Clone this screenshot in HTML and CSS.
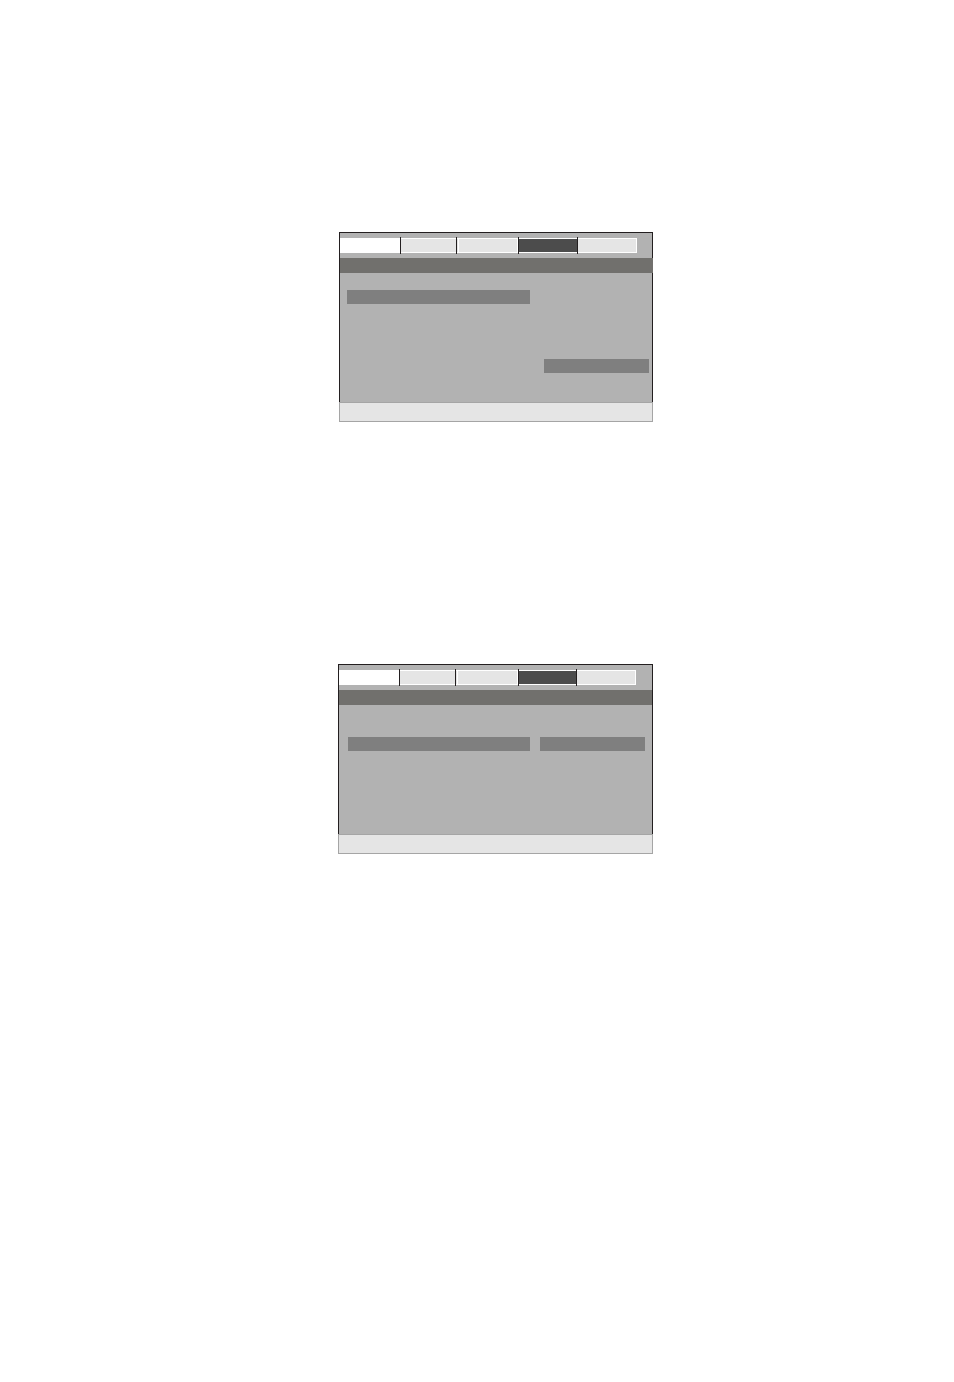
FILE: index.html
```html
<!DOCTYPE html>
<html lang="en">
<head>
<meta charset="utf-8">
<title>Setup menus</title>
<link rel="stylesheet" href="styles.css">
</head>
<body>
<main class="page">
  <section class="row row-first">
    <div class="panel">
      <div class="screen">
        <nav class="tabs">
          <button class="tab tab-blank" type="button"></button>
          <button class="tab" type="button"></button>
          <button class="tab tab-inset" type="button"></button>
          <button class="tab tab-active" type="button"></button>
          <button class="tab tab-last" type="button"></button>
        </nav>
        <header class="heading"></header>
        <div class="settings">
          <div class="bar bar-label"></div>
          <div class="bar bar-value"></div>
        </div>
      </div>
      <footer class="hint"></footer>
    </div>
  </section>
  <section class="row row-second">
    <div class="panel">
      <div class="screen">
        <nav class="tabs">
          <button class="tab tab-blank" type="button"></button>
          <button class="tab" type="button"></button>
          <button class="tab tab-inset" type="button"></button>
          <button class="tab tab-active" type="button"></button>
          <button class="tab tab-last" type="button"></button>
        </nav>
        <header class="heading"></header>
        <div class="settings">
          <div class="bar bar-label"></div>
          <div class="bar bar-value"></div>
        </div>
      </div>
      <footer class="hint"></footer>
    </div>
  </section>
</main>
</body>
</html>
```
FILE: styles.css
```css
* {
  box-sizing: border-box;
}

body {
  margin: 0;
  background: #fff;
  font-family: "Liberation Sans", sans-serif;
}

.page {
  display: flex;
  flex-direction: column;
  gap: 242px;
  min-height: 100vh;
  padding-top: 232px;
}

.row {
  display: grid;
}

.row-first {
  grid-template-columns: 339fr 314fr 301fr;
}

.row-second {
  grid-template-columns: 338fr 315fr 301fr;
}

.panel {
  grid-column: 2;
}

.screen {
  padding-top: 5px;
  background: #b2b2b2;
  border: 1px solid #231f20;
  border-bottom: 0;
}

.tabs {
  display: grid;
  height: 15px;
}

.row-first .tabs {
  grid-template-columns: 60fr 56fr 62fr 59fr 60fr 15fr;
}

.row-second .tabs {
  grid-template-columns: 60fr 56fr 63fr 58fr 60fr 16fr;
}

.tab {
  position: relative;
  min-width: 0;
  padding: 0;
  background: #e5e5e5;
  border: 0 solid #fff;
  border-width: 1px 0;
  border-radius: 0;
}

/* Divider that rises slightly above and below the tab strip */
.tab + .tab::before {
  content: "";
  position: absolute;
  top: -2px;
  bottom: -2px;
  left: 0;
  width: 1px;
  background: #231f20;
}

.tab-blank {
  background: #fff;
}

.tab-inset {
  border-right-width: 1px;
  background: linear-gradient(to right, #e5e5e5 2px, #fff 2px, #fff 3px, #e5e5e5 3px);
}

.tab-active {
  background: #4c4c4c;
}

.tab-last {
  border-right-width: 1px;
}

.heading {
  height: 15px;
  margin-top: 5px;
  background: #71706d;
}

.row-first .heading {
  margin-right: -1px;
}

.settings {
  display: grid;
  align-items: start;
  height: 129px;
}

.row-first .settings {
  grid-template-columns: 7fr 183fr 14fr 105fr 3fr;
}

.row-second .settings {
  grid-template-columns: 9fr 182fr 10fr 105fr 7fr;
}

.bar {
  height: 14px;
  background: #7f7f7f;
}

.bar-label {
  grid-column: 2;
}

.bar-value {
  grid-column: 4;
}

.row-first .bar-label {
  margin-top: 17px;
}

.row-first .bar-value {
  margin-top: 86px;
}

.row-second .bar {
  margin-top: 32px;
}

.hint {
  height: 20px;
  background: #e5e5e5;
  border: 1px solid #a5a5a5;
}
```
